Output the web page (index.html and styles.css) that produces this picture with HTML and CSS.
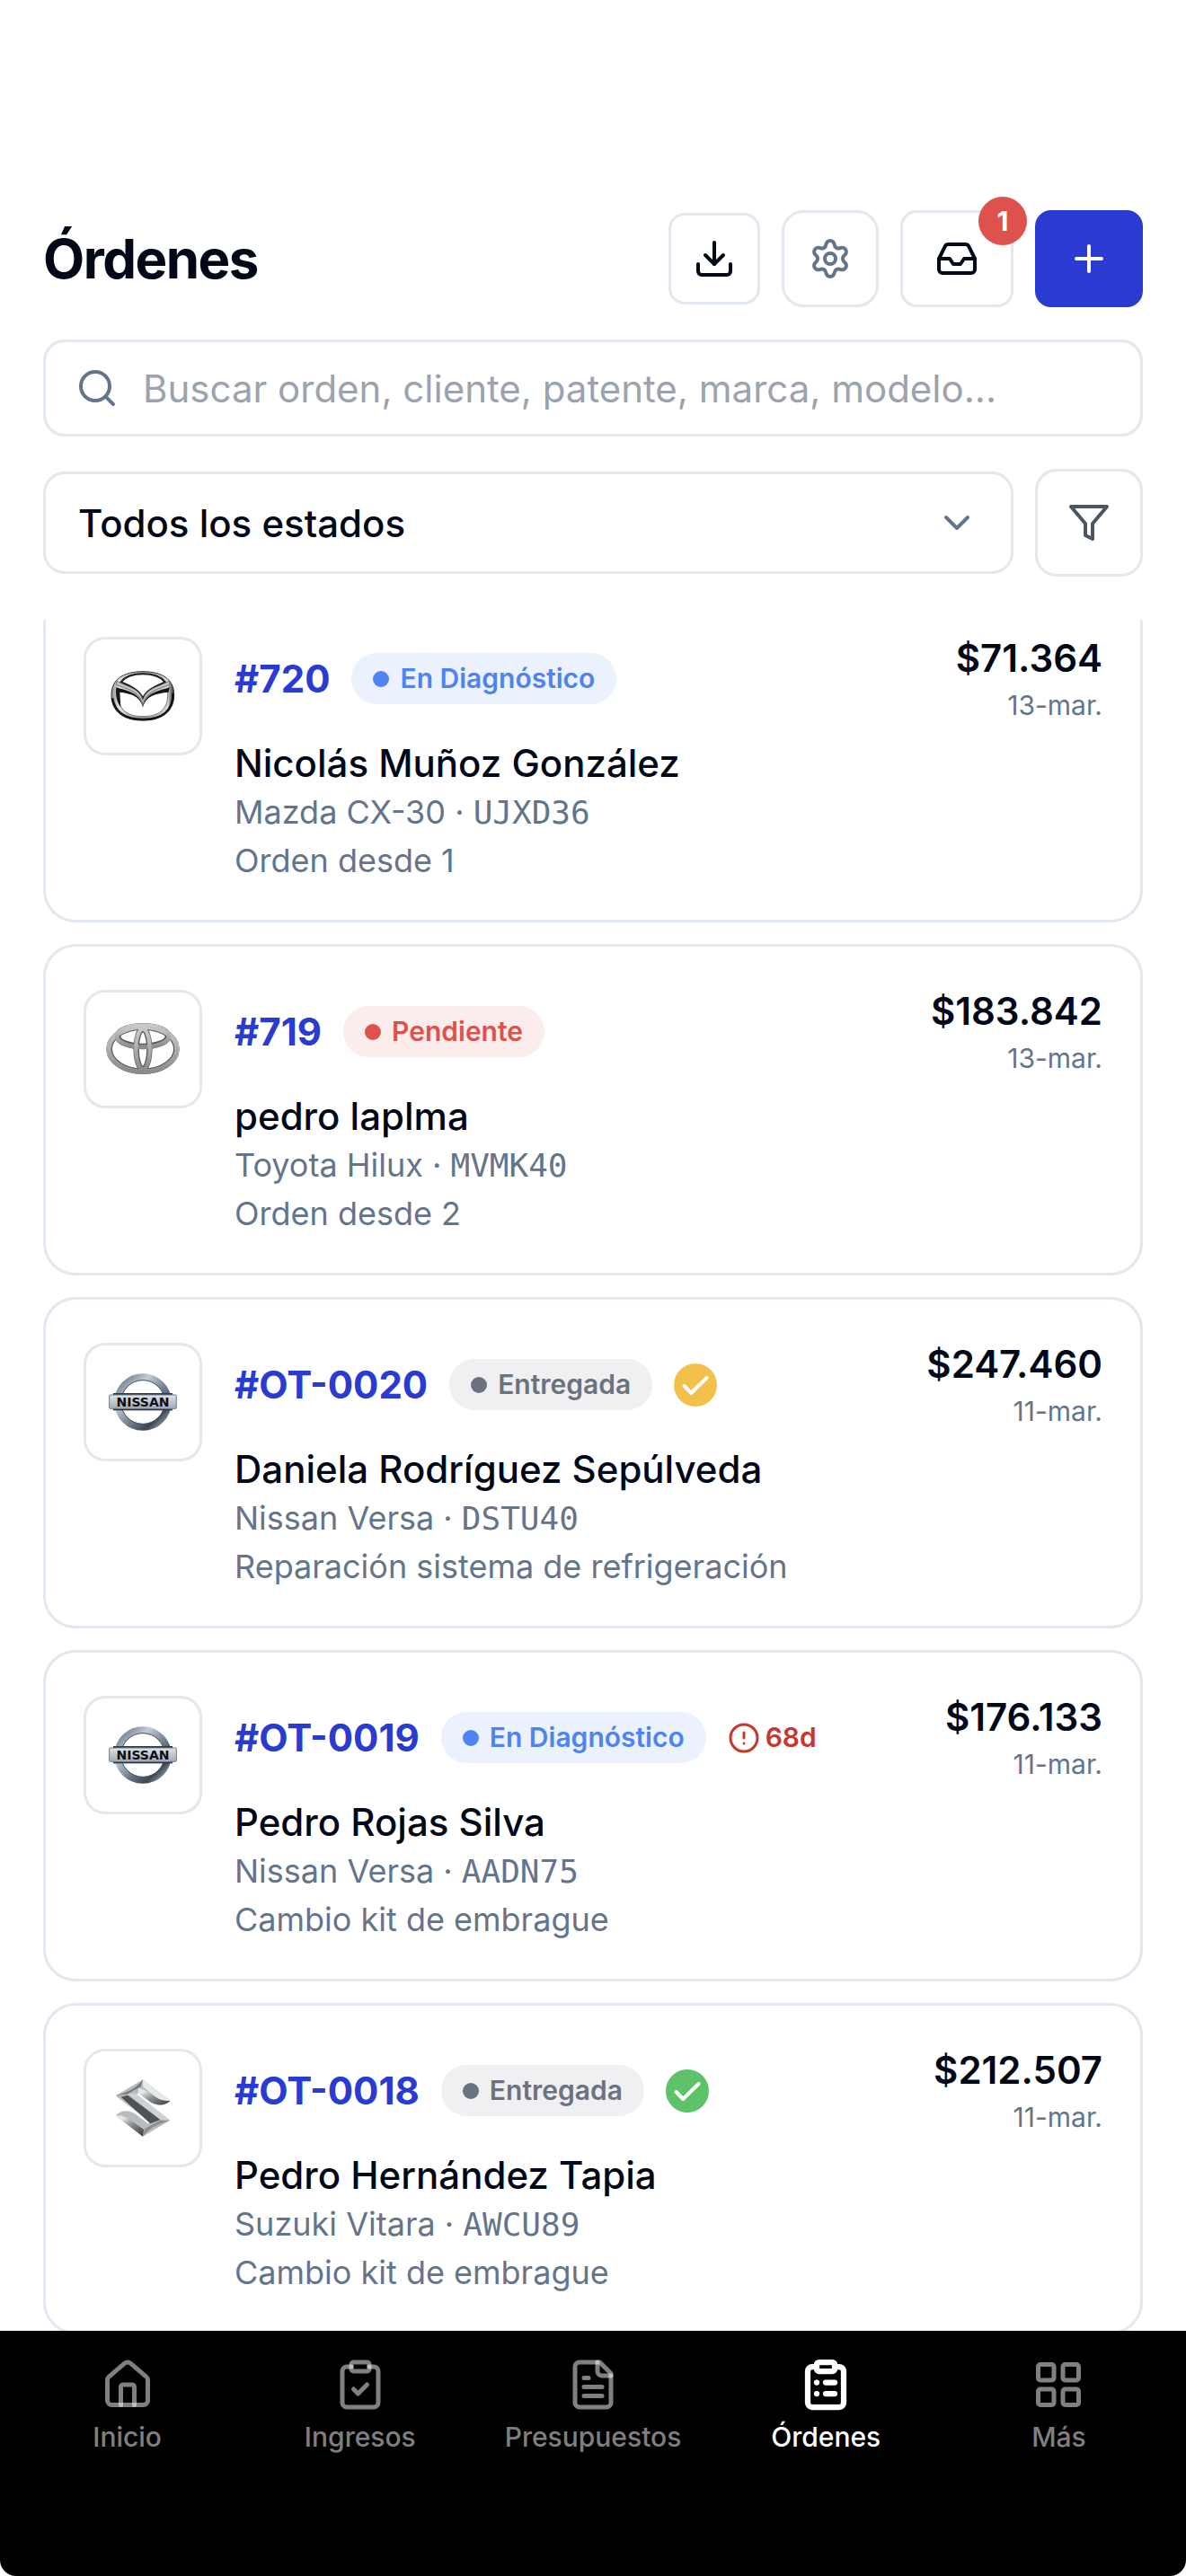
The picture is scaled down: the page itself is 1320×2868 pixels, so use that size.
FILE: index.html
```
<!DOCTYPE html>
<html lang="es">
<head>
<meta charset="utf-8">
<meta name="viewport" content="width=device-width, initial-scale=1">
<title>Órdenes</title>
<link rel="stylesheet" href="styles.css">
</head>
<body>
<!--shared gradients and check mark-->
<svg class="defs" width="0" height="0" aria-hidden="true">
	<defs>
		<linearGradient id="steel" x1="0" y1="0" x2="0" y2="1">
			<stop offset="0" stop-color="#c9c9c9"/>
			<stop offset="0.4" stop-color="#b4b4b4"/>
			<stop offset="1" stop-color="#8c8c8c"/>
		</linearGradient>
		<linearGradient id="chrome" x1="0" y1="0" x2="1" y2="1">
			<stop offset="0" stop-color="#5d6b7c"/>
			<stop offset="0.3" stop-color="#c3cbd5"/>
			<stop offset="0.6" stop-color="#6a7787"/>
			<stop offset="0.8" stop-color="#3a4653"/>
			<stop offset="1" stop-color="#b8c2cc"/>
		</linearGradient>
		<linearGradient id="bar" x1="0" y1="0" x2="0" y2="1">
			<stop offset="0" stop-color="#dfe3ea"/>
			<stop offset="1" stop-color="#a3abb8"/>
		</linearGradient>
		<linearGradient id="fold" x1="0" y1="0" x2="1" y2="1">
			<stop offset="0.2" stop-color="#e4e6e7"/>
			<stop offset="0.5" stop-color="#8a8f92"/>
			<stop offset="1" stop-color="#343a3d"/>
		</linearGradient>
		<linearGradient id="ring" x1="0" y1="0" x2="1" y2="0">
			<stop offset="0" stop-color="#8a8a8a"/>
			<stop offset="0.12" stop-color="#e2e2e2"/>
			<stop offset="0.5" stop-color="#9a9a9a"/>
			<stop offset="0.9" stop-color="#d8d8d8"/>
			<stop offset="1" stop-color="#222"/>
		</linearGradient>
	</defs>
	<symbol id="paid" viewBox="0 0 24 24">
		<circle cx="12" cy="12" r="12" fill="currentColor"/>
		<path d="M5.8 12.5l3.8 4L18.3 8" fill="none" stroke="#fff" stroke-width="2" stroke-linecap="round" stroke-linejoin="round"/>
	</symbol>
</svg>

<!--header-->
<header class="top">
	<div class="title-row">
		<h1>Órdenes</h1>
		<button type="button" class="btn download" aria-label="Descargar">
			<svg class="icon" viewBox="0 0 24 24"><path d="M12 15V3"/><path d="M21 15v4a2 2 0 0 1-2 2H5a2 2 0 0 1-2-2v-4"/><path d="m7 10 5 5 5-5"/></svg>
		</button>
		<button type="button" class="btn settings" aria-label="Configuración">
			<svg class="icon" viewBox="0 0 24 24"><path d="M9.671 4.136a2.34 2.34 0 0 1 4.659 0 2.34 2.34 0 0 0 3.319 1.915 2.34 2.34 0 0 1 2.33 4.033 2.34 2.34 0 0 0 0 3.831 2.34 2.34 0 0 1-2.33 4.033 2.34 2.34 0 0 0-3.319 1.915 2.34 2.34 0 0 1-4.659 0 2.34 2.34 0 0 0-3.32-1.915 2.34 2.34 0 0 1-2.33-4.033 2.34 2.34 0 0 0 0-3.831A2.34 2.34 0 0 1 6.35 6.051a2.34 2.34 0 0 0 3.319-1.915"/><circle cx="12" cy="12" r="3"/></svg>
		</button>
		<button type="button" class="btn inbox" aria-label="Bandeja">
			<svg class="icon" viewBox="0 0 24 24"><path d="M22 12h-6l-2 3h-4l-2-3H2"/><path d="M5.45 5.11 2 12v6a2 2 0 0 0 2 2h16a2 2 0 0 0 2-2v-6l-3.45-6.89A2 2 0 0 0 16.76 4H7.24a2 2 0 0 0-1.79 1.11z"/></svg>
			<span class="count">1</span>
		</button>
		<button type="button" class="btn add" aria-label="Nueva orden">
			<svg class="icon" viewBox="0 0 24 24"><path d="M5 12h14"/><path d="M12 5v14"/></svg>
		</button>
	</div>
	<label class="search">
		<svg class="icon" viewBox="0 0 24 24"><circle cx="11" cy="11" r="8"/><path d="m21 21-4.3-4.3"/></svg>
		<input type="text" aria-label="Buscar" placeholder="Buscar orden, cliente, patente, marca, modelo...">
	</label>
	<div class="filters">
		<div class="state">
			<select aria-label="Estado">
				<option>Todos los estados</option>
				<option>Pendiente</option>
				<option>En Diagnóstico</option>
				<option>Entregada</option>
			</select>
			<svg class="icon" viewBox="0 0 24 24"><path d="m6 9 6 6 6-6"/></svg>
		</div>
		<button type="button" class="btn filter" aria-label="Filtros">
			<svg class="icon" viewBox="0 0 24 24"><path d="M22 3H2l8 9.46V19l4 2v-8.54L22 3z"/></svg>
		</button>
	</div>
</header>

<!--orders-->
<main class="list" id="list">
	<article class="card">
		<div class="brand">
			<svg viewBox="111 129 252 252" role="img" aria-label="Mazda">
				<path fill="url(#ring)" stroke="#333" stroke-width="3" d="M237 173C300 173 341 198 341 250C341 308 300 336 237 336C174 336 132 308 132 250C132 198 174 173 237 173Z"/>
				<path fill="none" stroke="#151515" stroke-width="8" d="M135 262C142 306 176 333 237 333C298 333 338 306 338 245"/>
				<path fill="#fff" stroke="#1c1c1c" stroke-width="6" d="M164 208C180 188 205 181 237 181C270 181 295 188 311 208C288 219 252 230 237 262C222 230 188 219 164 208Z"/>
				<path fill="#fff" stroke="#777" stroke-width="3" d="M156 236C190 240 229 250 237 290C245 250 285 240 320 236C324 292 300 323 237 323C175 323 150 292 156 236Z"/>
				<path fill="#151515" d="M148 226C185 238 225 242 237 290C249 242 290 238 327 226L322 242C280 246 248 254 237 290C226 254 196 246 160 242L163 292C150 275 145 252 148 226Z"/>
				<path fill="#c4c4c4" stroke="#555" stroke-width="2" d="M148 204C180 224 226 226 237 268C248 226 294 224 326 204L325 218C285 232 246 240 237 284C228 240 189 232 149 218Z"/>
			</svg>
		</div>
		<div class="info">
			<div class="head">
				<a href="#720">#720</a>
				<span class="badge diag">En Diagnóstico</span>
			</div>
			<h2>Nicolás Muñoz González</h2>
			<p>Mazda CX-30 · <span class="plate">UJXD36</span></p>
			<p>Orden desde 1</p>
		</div>
		<div class="total">
			<strong>$71.364</strong>
			<time>13-mar.</time>
		</div>
	</article>

	<article class="card">
		<div class="brand">
			<svg viewBox="111 108 252 252" role="img" aria-label="Toyota">
				<g fill="none" stroke="#5c5c5c">
					<ellipse cx="237" cy="234" rx="112" ry="74" stroke-width="20"/>
					<ellipse cx="237" cy="191" rx="84" ry="34" stroke-width="20"/>
					<ellipse cx="237" cy="234" rx="22" ry="66" stroke-width="19"/>
				</g>
				<g fill="none" stroke="url(#steel)">
					<ellipse cx="237" cy="234" rx="114" ry="75" stroke-width="16"/>
					<ellipse cx="237" cy="191" rx="87" ry="36" stroke-width="14"/>
					<ellipse cx="237" cy="234" rx="23" ry="67" stroke-width="13"/>
				</g>
			</svg>
		</div>
		<div class="info">
			<div class="head">
				<a href="#719">#719</a>
				<span class="badge pend">Pendiente</span>
			</div>
			<h2>pedro laplma</h2>
			<p>Toyota Hilux · <span class="plate">MVMK40</span></p>
			<p>Orden desde 2</p>
		</div>
		<div class="total">
			<strong>$183.842</strong>
			<time>13-mar.</time>
		</div>
	</article>

	<article class="card">
		<div class="brand">
			<svg viewBox="111 117 252 252" role="img" aria-label="Nissan">
				<circle cx="237" cy="243" r="84" fill="none" stroke="url(#chrome)" stroke-width="23"/>
				<circle cx="237" cy="243" r="73" fill="none" stroke="#44505e" stroke-width="3"/>
				<rect x="138" y="213" width="198" height="58" fill="#2f3946"/>
				<rect x="125" y="219" width="224" height="46" rx="3" fill="url(#bar)" stroke="#6f7a88" stroke-width="3"/>
				<text class="nissan-name" x="237" y="257" text-anchor="middle">NISSAN</text>
			</svg>
		</div>
		<div class="info">
			<div class="head">
				<a href="#OT-0020">#OT-0020</a>
				<span class="badge done">Entregada</span>
				<svg class="paid partial" role="img" aria-label="Pago parcial"><use href="#paid"/></svg>
			</div>
			<h2>Daniela Rodríguez Sepúlveda</h2>
			<p>Nissan Versa · <span class="plate">DSTU40</span></p>
			<p>Reparación sistema de refrigeración</p>
		</div>
		<div class="total">
			<strong>$247.460</strong>
			<time>11-mar.</time>
		</div>
	</article>

	<article class="card">
		<div class="brand">
			<svg viewBox="111 117 252 252" role="img" aria-label="Nissan">
				<circle cx="237" cy="243" r="84" fill="none" stroke="url(#chrome)" stroke-width="23"/>
				<circle cx="237" cy="243" r="73" fill="none" stroke="#44505e" stroke-width="3"/>
				<rect x="138" y="213" width="198" height="58" fill="#2f3946"/>
				<rect x="125" y="219" width="224" height="46" rx="3" fill="url(#bar)" stroke="#6f7a88" stroke-width="3"/>
				<text class="nissan-name" x="237" y="257" text-anchor="middle">NISSAN</text>
			</svg>
		</div>
		<div class="info">
			<div class="head">
				<a href="#OT-0019">#OT-0019</a>
				<span class="badge diag">En Diagnóstico</span>
				<span class="late">
					<svg class="icon" viewBox="0 0 24 24"><circle cx="12" cy="12" r="10"/><path d="M12 8v4"/><path d="M12 16h.01"/></svg>68d
				</span>
			</div>
			<h2>Pedro Rojas Silva</h2>
			<p>Nissan Versa · <span class="plate">AADN75</span></p>
			<p>Cambio kit de embrague</p>
		</div>
		<div class="total">
			<strong>$176.133</strong>
			<time>11-mar.</time>
		</div>
	</article>

	<article class="card">
		<div class="brand">
			<svg viewBox="111 105 252 252" role="img" aria-label="Suzuki">
				<path fill="#b9bcbe" d="M237 136L328 207C312 224 282 224 262 211L222 181L216 185L328 272L237 326L146 256C164 236 192 236 214 252L254 283L262 279L146 190Z"/>
				<path fill="url(#fold)" d="M222 163L328 207C312 224 282 224 262 211L222 181Z"/>
				<path fill="#e6e8e9" d="M237 136L328 207C310 208 294 204 280 194L237 160Z"/>
				<path fill="#75797c" d="M237 136L230 160L186 184L146 190C190 178 215 165 237 136Z"/>
				<path fill="#4d5356" d="M164 194L186 188L296 270L262 283Z"/>
				<path fill="#cfd2d3" d="M188 184L214 182L328 272L296 271Z"/>
				<path fill="url(#fold)" d="M146 256C166 254 182 260 198 272L240 303L237 326Z"/>
				<path fill="#8a8e91" d="M328 272C290 282 258 298 237 326L243 300L296 272Z"/>
			</svg>
		</div>
		<div class="info">
			<div class="head">
				<a href="#OT-0018">#OT-0018</a>
				<span class="badge done">Entregada</span>
				<svg class="paid" role="img" aria-label="Pagada"><use href="#paid"/></svg>
			</div>
			<h2>Pedro Hernández Tapia</h2>
			<p>Suzuki Vitara · <span class="plate">AWCU89</span></p>
			<p>Cambio kit de embrague</p>
		</div>
		<div class="total">
			<strong>$212.507</strong>
			<time>11-mar.</time>
		</div>
	</article>
</main>

<!--tab bar-->
<nav class="tabs">
	<a href="#inicio">
		<svg class="icon" viewBox="0 0 24 24"><path d="M15 21v-8a1 1 0 0 0-1-1h-4a1 1 0 0 0-1 1v8"/><path d="M3 10a2 2 0 0 1 .709-1.528l7-5.999a2 2 0 0 1 2.582 0l7 5.999A2 2 0 0 1 21 10v9a2 2 0 0 1-2 2H5a2 2 0 0 1-2-2z"/></svg>
		Inicio
	</a>
	<a href="#ingresos">
		<svg class="icon" viewBox="0 0 24 24"><rect width="8" height="4" x="8" y="2" rx="1"/><path d="M16 4h2a2 2 0 0 1 2 2v14a2 2 0 0 1-2 2H6a2 2 0 0 1-2-2V6a2 2 0 0 1 2-2h2"/><path d="m9 14 2 2 4-4"/></svg>
		Ingresos
	</a>
	<a href="#presupuestos">
		<svg class="icon" viewBox="0 0 24 24"><path d="M15 2H6a2 2 0 0 0-2 2v16a2 2 0 0 0 2 2h12a2 2 0 0 0 2-2V7Z"/><path d="M14 2v4a2 2 0 0 0 2 2h4"/><path d="M10 9H8"/><path d="M16 13H8"/><path d="M16 17H8"/></svg>
		Presupuestos
	</a>
	<a href="#ordenes" class="active" aria-current="page">
		<svg class="icon" viewBox="0 0 24 24"><rect width="8" height="4" x="8" y="2" rx="1"/><path d="M16 4h2a2 2 0 0 1 2 2v14a2 2 0 0 1-2 2H6a2 2 0 0 1-2-2V6a2 2 0 0 1 2-2h2"/><path d="M12 11h4"/><path d="M12 16h4"/><path d="M8 11h.01"/><path d="M8 16h.01"/></svg>
		Órdenes
	</a>
	<a href="#mas">
		<svg class="icon" viewBox="0 0 24 24"><rect width="7" height="7" x="3" y="3" rx="1"/><rect width="7" height="7" x="14" y="3" rx="1"/><rect width="7" height="7" x="14" y="14" rx="1"/><rect width="7" height="7" x="3" y="14" rx="1"/></svg>
		Más
	</a>
</nav>
<script>
	document.getElementById("list").scrollTop = 32;
</script>
</body>
</html>
```
FILE: styles.css
```
*{box-sizing:border-box;}
body,h1,h2,p{margin:0;padding:0;}
body{display:flex;flex-direction:column;height:100vh;background:#fff;color:#020817;font:42px/1.5 Inter,"Liberation Sans",sans-serif;}
button,input,select{font:inherit;color:inherit;margin:0;}
a{text-decoration:none;}
.defs{position:absolute;}
.icon{display:block;flex:none;width:48px;height:48px;fill:none;stroke:currentColor;stroke-width:2;stroke-linecap:round;stroke-linejoin:round;}

/*header*/
.top{display:flex;flex-direction:column;gap:36px;padding:234px 48px 48px;}
.title-row{display:flex;align-items:center;gap:24px;}
	.title-row h1{flex:1;font-size:60px;line-height:84px;font-weight:700;letter-spacing:-0.025em;}
.btn{position:relative;display:flex;align-items:center;justify-content:center;flex:none;height:108px;padding:0;background:#fff;border:3px solid #e2e8f0;border-radius:18px;cursor:pointer;}
	.download{width:102px;height:102px;}
	.settings{width:108px;border-radius:24px;color:#64748b;}
	.inbox{width:126px;}
	.add{width:120px;background:#293bd1;border-color:#293bd1;color:#fff;}
	.filter{width:120px;height:120px;border-color:#e5e7eb;border-radius:24px;color:#4b5563;}
.count{position:absolute;top:-18px;right:-18px;width:54px;height:54px;border-radius:50%;background:#dd524c;color:#fff;font-size:30px;line-height:54px;font-weight:700;text-align:center;}
.search{display:flex;align-items:center;gap:27px;height:108px;padding:0 33px;border:3px solid #e2e8f0;border-radius:24px;}
	.search .icon{color:#64748b;}
	.search input{flex:1;min-width:0;padding:0;border:0;outline:0;background:none;}
	.search input::placeholder{color:#9ca3af;opacity:1;}
.filters{display:flex;align-items:center;gap:24px;}
.state{position:relative;flex:1;}
	.state select{display:block;width:100%;height:114px;padding:0 36px;appearance:none;background:#fff;border:3px solid #e5e7eb;border-radius:24px;font-weight:500;}
	.state .icon{position:absolute;top:33px;right:39px;color:#64748b;pointer-events:none;}

/*orders*/
.list{flex:1;min-height:0;display:flex;flex-direction:column;gap:24px;padding:0 48px 24px;overflow-y:auto;scrollbar-width:none;}
.card{flex:none;display:flex;align-items:flex-start;gap:36px;padding:42px 42px 39px;border:3px solid #e2e8f0;border-radius:36px;}
.brand{flex:none;display:flex;align-items:center;justify-content:center;width:132px;height:132px;margin-top:6px;border:3px solid #e5e7eb;border-radius:24px;}
	.brand svg{width:84px;height:84px;}
	.nissan-name{font:bold 42px "DejaVu Sans",sans-serif;fill:#0b0e13;}
.info{flex:1;min-width:0;}
	.info h2{margin-top:15px;font-size:42px;line-height:54px;font-weight:500;}
	.info p{font-size:36px;line-height:54px;color:#64748b;}
	.plate{font-family:"DejaVu Sans Mono",monospace;line-height:1;}
.head{display:flex;align-items:center;gap:24px;height:105px;}
	.head a{color:#293bd1;font-weight:700;}
.badge{display:flex;align-items:center;gap:12px;padding:6px 24px;border-radius:29px;font-size:30px;line-height:45px;font-weight:600;}
	.badge:before{content:"";width:18px;height:18px;border-radius:50%;background:currentColor;}
	.diag{background:#ebf2fd;color:#4f83f0;}
	.pend{background:#fbedec;color:#dd524c;}
	.done{background:#f0f0f2;color:#6b7280;}
.paid{width:48px;height:48px;color:#5ec269;}
	.partial{color:#f2c04b;}
.late{display:flex;align-items:center;gap:6px;color:#c8372d;font-size:30px;line-height:45px;font-weight:600;}
	.late .icon{width:36px;height:36px;}
.total{flex:none;text-align:right;}
	.total strong{display:block;line-height:60px;font-weight:600;}
	.total time{display:block;font-size:30px;line-height:45px;color:#64748b;}

/*tab bar*/
.tabs{flex:none;display:flex;padding:30px 12px 132px;background:#000;border-radius:0 0 18px 18px;}
	.tabs a{flex:1;display:flex;flex-direction:column;align-items:center;gap:6px;color:rgba(255,255,255,.5);font-size:30px;line-height:45px;font-weight:500;}
	.tabs .icon{width:60px;height:60px;}
	.tabs .active{color:#fff;}
	.tabs .active .icon{stroke-width:2.5;}
```
